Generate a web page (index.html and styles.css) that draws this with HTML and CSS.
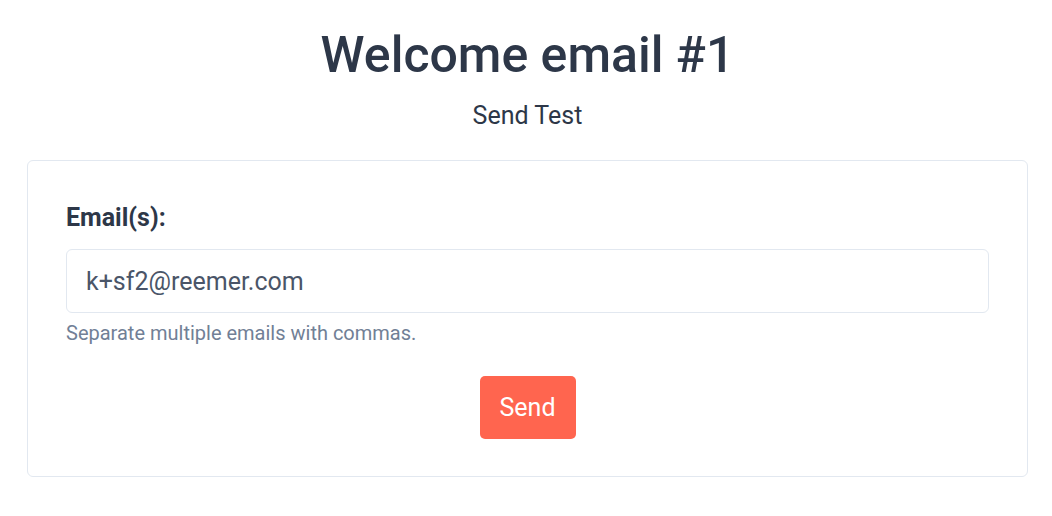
FILE: index.html
```html
<!DOCTYPE html>
<html lang="en">
<head>
    <meta charset="UTF-8">
    <meta name="viewport" content="width=device-width, initial-scale=1.0">
    <title>Send Test</title>
    <link rel="stylesheet" href="styles.css">
</head>
<body>
<div class="page">
    <header class="head">
        <h1 class="title">Welcome email #1</h1>
        <p class="subtitle">Send Test</p>
    </header>
    <form class="card">
        <label class="label" for="emails">Email(s):</label>
        <input class="input" id="emails" type="text" value="k+sf2@reemer.com">
        <p class="help">Separate multiple emails with commas.</p>
        <div class="actions">
            <button class="btn" type="button">Send</button>
        </div>
    </form>
</div>
</body>
</html>
```

FILE: styles.css
```css
html {
    font-family: Roboto, "Liberation Sans", sans-serif;
}

body {
    margin: 0;
    background: #fff;
    color: #2d3748;
}

.page {
    padding: 23px 24px 0 27px;
}

.head {
    text-align: center;
}

.title {
    margin: 0;
    font-size: 50px;
    line-height: 64px;
    font-weight: 500;
    color: #2d3748;
}

.subtitle {
    margin: 13px 0 0;
    font-size: 25px;
    line-height: 32px;
}

.card {
    margin-top: 28px;
    padding: 40px 38px 37px;
    border: 1px solid #e2e8f0;
    border-radius: 6px;
}

.label {
    display: block;
    font-size: 25px;
    line-height: 34px;
    font-weight: 700;
}

.input {
    display: block;
    box-sizing: border-box;
    width: 100%;
    height: 64px;
    margin-top: 14px;
    padding: 0 19px;
    border: 1px solid #e2e8f0;
    border-radius: 6px;
    font: 25px Roboto, "Liberation Sans", sans-serif;
    color: #4a5568;
    outline: none;
}

.help {
    margin: 6px 0 0;
    font-size: 20px;
    line-height: 28px;
    color: #718096;
}

.actions {
    margin-top: 29px;
    text-align: center;
}

.btn {
    display: inline-block;
    vertical-align: top;
    width: 96px;
    height: 63px;
    border: none;
    border-radius: 5px;
    background: #ff654f;
    color: #fff;
    font: 25px Roboto, "Liberation Sans", sans-serif;
}
```
